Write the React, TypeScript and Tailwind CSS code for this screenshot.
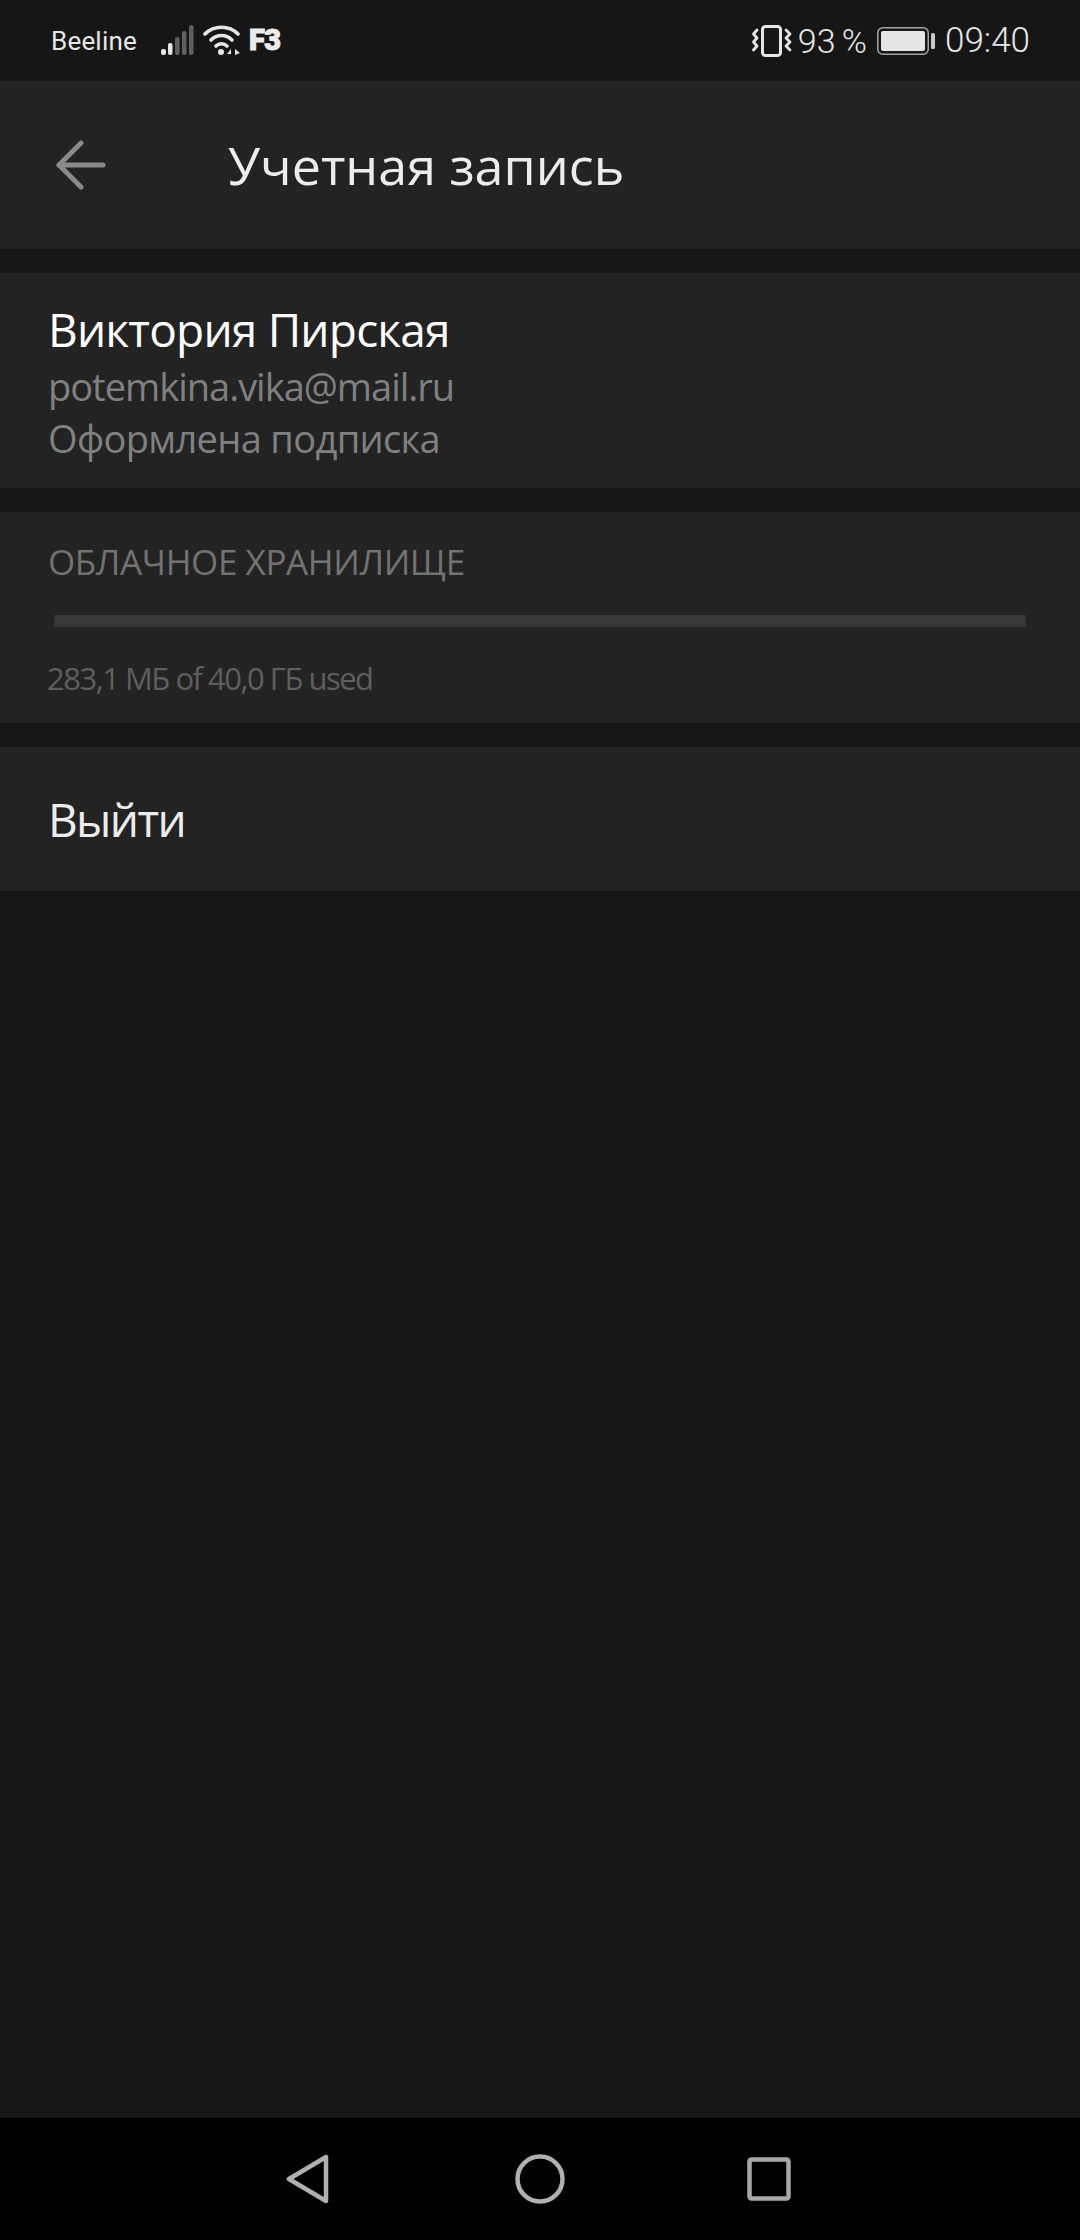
import React from 'react';

const sans = "font-['Open_Sans','Noto_Sans',sans-serif]";

const SignalIcon = () => (
  <svg width="34" height="32" viewBox="0 0 34 32" className="ml-[24px]">
    <rect x="0" y="24" width="5" height="6" rx="2" fill="#e6e6e6" />
    <rect x="7" y="18" width="4.5" height="12" rx="2" fill="#e6e6e6" />
    <rect x="14" y="12" width="4.5" height="18" rx="2" fill="#5f5f5f" />
    <rect x="21" y="6" width="4.5" height="24" rx="2" fill="#5f5f5f" />
    <rect x="28" y="0" width="4.5" height="30" rx="2" fill="#5f5f5f" />
  </svg>
);

const WifiIcon = () => (
  <svg width="38" height="32" viewBox="0 0 38 32" fill="none" stroke="#e6e6e6" strokeWidth="3.6" strokeLinecap="round" className="ml-[8px]">
    <path d="M2 9 C11 0 26 0 35 9" />
    <path d="M8 15 C14 9 23 9 29 15" />
    <path d="M13 21 C16 18 21 18 24 21" />
    <circle cx="18" cy="27" r="3" fill="#e6e6e6" stroke="none" />
    <path d="M28 24 L24 29 H28 Z" fill="#e6e6e6" stroke="none" />
    <path d="M32 24 L37 28 L32 30 Z" fill="#e6e6e6" stroke="none" />
  </svg>
);

const VibrateIcon = () => (
  <svg width="40" height="32" viewBox="0 0 40 32" fill="none" stroke="#e6e6e6" strokeLinecap="round" strokeLinejoin="round">
    <rect x="10.5" y="1.5" width="18" height="29" rx="3" strokeWidth="3" />
    <path d="M5 5 L1.5 9 L5 13 L1.5 17 L5 21 L1.5 25" strokeWidth="2.8" />
    <path d="M34 5 L38 9 L34 13 L38 17 L34 21 L38 25" strokeWidth="2.8" />
  </svg>
);

const BatteryIcon = () => (
  <svg width="58" height="28" viewBox="0 0 58 28" fill="none">
    <rect x="0.75" y="0.75" width="50.5" height="26.5" rx="5" stroke="#a5a5a5" strokeWidth="1.5" />
    <rect x="4" y="4" width="44" height="20" rx="2" fill="#e6e6e6" />
    <rect x="54" y="6" width="4" height="16" rx="1.5" fill="#c8c8c8" />
  </svg>
);

export default function App() {
  return (
    <div className={`flex flex-col w-[1080px] h-[2240px] bg-[#171717] overflow-hidden ${sans}`}>
      {/* status bar */}
      <div className="flex items-center justify-between h-[81px] bg-[#161616] pl-[51px] pr-[50px] text-[#e6e6e6] font-['Roboto',sans-serif]">
        <div className="flex items-center">
          <span className="text-[26px] leading-none tracking-[0.2px]">Beeline</span>
          <SignalIcon />
          <WifiIcon />
          <span className="ml-[8px] text-[29px] font-black leading-none tracking-[-0.5px] text-[#ececec] [-webkit-text-stroke:1px_#ececec]">F3</span>
        </div>
        <div className="flex items-center">
          <VibrateIcon />
          <span className="ml-[6px] text-[34px] leading-none font-light [word-spacing:-2px]">93 %</span>
          <span className="ml-[10px] flex"><BatteryIcon /></span>
          <span className="ml-[10px] text-[35px] leading-none font-light">09:40</span>
        </div>
      </div>

      {/* toolbar */}
      <div className="flex items-center h-[168px] bg-[#232323] pl-[56px]">
        <svg width="50" height="50" viewBox="0 0 50 50" fill="none" stroke="#8a8a8a" strokeWidth="5" strokeLinecap="round" strokeLinejoin="round">
          <path d="M3 25 H47" />
          <path d="M25 3 L3 25 L25 47" />
        </svg>
        <h1 className="ml-[122px] text-[52px] leading-none text-[#ececec]">Учетная запись</h1>
      </div>

      {/* account */}
      <div className="flex flex-col mt-[24px] h-[215px] bg-[#232323] px-[48px] pt-[27px]">
        <div className="text-[46px] leading-[58px] tracking-[-0.8px] text-white">Виктория Пирская</div>
        <div className="mt-[2px] text-[38px] leading-[52px] tracking-[-1px] text-[#808080]">potemkina.vika@mail.ru</div>
        <div className="text-[38px] leading-[52px] tracking-[-0.65px] text-[#808080]">Оформлена подписка</div>
      </div>

      {/* storage */}
      <div className="flex flex-col mt-[24px] h-[211px] bg-[#232323] px-[48px] pt-[27px]">
        <div className="text-[35px] leading-[46px] tracking-[-0.4px] text-[#727272]">ОБЛАЧНОЕ ХРАНИЛИЩЕ</div>
        <div className="mt-[30px] ml-[6px] w-[972px] h-[12px] bg-[#383838]" />
        <div className="mt-[31px] -ml-[1px] text-[31px] leading-[40px] tracking-[-1.5px] text-[#5e5e5e]">283,1 МБ of 40,0 ГБ used</div>
      </div>

      {/* sign out */}
      <div className="flex items-center mt-[24px] h-[144px] bg-[#232323] px-[48px]">
        <span className="text-[46px] leading-none tracking-[-1.6px] text-[#ececec]">Выйти</span>
      </div>

      {/* android nav bar */}
      <div className="flex items-center pl-[286px] mt-auto h-[122px] bg-black">
        <svg width="44" height="50" viewBox="0 0 44 50" fill="none" stroke="#b0b0b0" strokeWidth="4.5" strokeLinejoin="round">
          <path d="M40 3 V47 L3 25 Z" />
        </svg>
        <svg width="50" height="50" viewBox="0 0 50 50" fill="none" stroke="#b0b0b0" strokeWidth="4.5" className="ml-[185px]">
          <circle cx="25" cy="25" r="22.5" />
        </svg>
        <svg width="44" height="44" viewBox="0 0 44 44" fill="none" stroke="#a8a8a8" strokeWidth="4.5" strokeLinejoin="round" className="ml-[182px]">
          <rect x="2.5" y="2.5" width="39" height="39" rx="2" />
        </svg>
      </div>
    </div>
  );
}
